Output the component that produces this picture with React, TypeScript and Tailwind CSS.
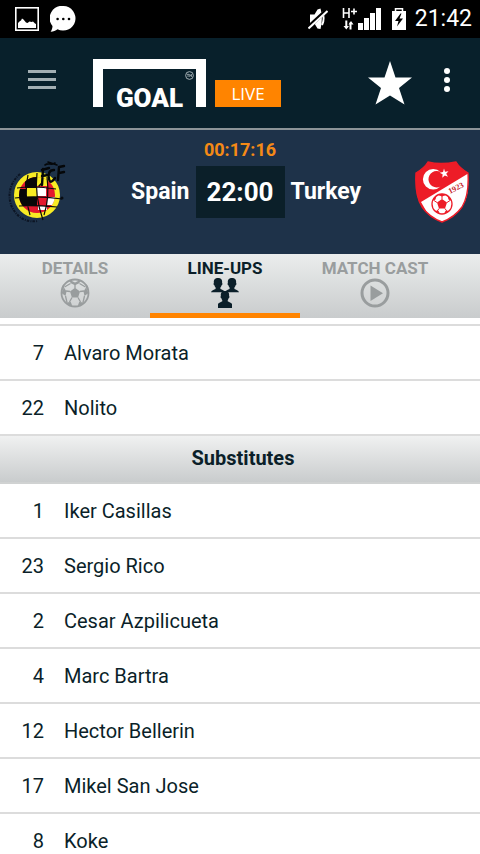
import { useState } from "react";

type Player = { number: number; name: string };

const starters: Player[] = [
  { number: 7, name: "Alvaro Morata" },
  { number: 22, name: "Nolito" },
];

const substitutes: Player[] = [
  { number: 1, name: "Iker Casillas" },
  { number: 23, name: "Sergio Rico" },
  { number: 2, name: "Cesar Azpilicueta" },
  { number: 4, name: "Marc Bartra" },
  { number: 12, name: "Hector Bellerin" },
  { number: 17, name: "Mikel San Jose" },
  { number: 8, name: "Koke" },
];

function StatusBar() {
  return (
    <div className="flex h-[38px] shrink-0 items-center justify-between bg-black pl-[15px] pr-2 text-white">
      <div className="flex items-center gap-[11px]">
        <svg width="24" height="24" viewBox="0 0 24 24">
          <rect x="0.8" y="0.8" width="22.4" height="22.4" fill="none" stroke="#fff" strokeWidth="1.6" />
          <path d="M3 21v-5l2-2 1-.5 1-2 1.5 1 2.5 3 1.5.5 2-1.5 2 .5 1.5-.5 2 2 1 .5v4z" fill="#fff" />
        </svg>
        <svg width="26" height="26" viewBox="0 0 26 26">
          <path d="M13.5 0a12.3 12.3 0 1 1-6 23.2C5.5 24.8 3.5 25.6.6 25.8c1.2-1.8 1.9-3.5 1.9-5.8A12.3 12.3 0 0 1 13.5 0z" fill="#fff" />
          <circle cx="7.6" cy="13" r="1.3" />
          <circle cx="13.3" cy="13" r="1.3" />
          <circle cx="19" cy="13" r="1.3" />
        </svg>
      </div>
      <div className="flex items-center">
        <svg width="20" height="22" viewBox="0 0 20 22" className="mr-[14px]">
          <path d="M2 6.5h4.500L9.500 1.500l3-1c1.800 6 1.800 14 0 20.500l-3-.500-3-5H2z" fill="#fff" />
          <path d="M14 4c2 4 2 9 0 13" fill="none" stroke="#fff" strokeWidth="2" />
          <path d="M.5 19 19 2" stroke="#000" strokeWidth="4" />
          <path d="M.5 20.500 19.500 3" stroke="#fff" strokeWidth="2" />
        </svg>
        <svg width="39" height="24" viewBox="0 0 39 24" className="mr-[11px]">
          <path d="M1.500 1v10M7 1v10M1.500 6H7M9 4.500h6M12 1.500v6" fill="none" stroke="#fff" strokeWidth="1.6" />
          <path d="M1.500 19 4.300 22.500 7 19M6.500 17.500 9 14l2.500 3.500" fill="#fff" />
          <path d="M4.300 13.500v7.500M8.500 15.500v7" stroke="#fff" strokeWidth="2" />
          <path d="M16 16h5v7h-5zM22 11h5v12h-5zM28 6h5v17h-5zM34 1h5v22h-5z" fill="#fff" />
        </svg>
        <svg width="14" height="22" viewBox="0 0 14 22" className="mr-[9px]">
          <path d="M3.500 3.500V.8h7v2.700" fill="none" stroke="#fff" strokeWidth="1.5" />
          <path d="M0 3h14v19H0z" fill="#fff" />
          <path d="M8.500 5.500 3 13h3.500L5 18.500l6-8H7.500L9.500 5.500z" />
        </svg>
        <span className="text-[23px] leading-6">21:42</span>
      </div>
    </div>
  );
}

function Header() {
  return (
    <header className="flex h-[92px] shrink-0 items-start border-b-2 border-[#8c9498] bg-[#08202b] pl-7 pr-[30px] text-white">
      <button type="button" aria-label="Menu" className="mt-8 flex flex-col gap-[5px]">
        <span className="h-[3px] w-7 bg-[#a3afb3]" />
        <span className="h-[3px] w-7 bg-[#a3afb3]" />
        <span className="h-[3px] w-7 bg-[#a3afb3]" />
      </button>
      <a href="#home" className="ml-[37px] mt-[21px] flex items-end gap-[9px]">
        <span className="relative flex h-12 w-[113px] items-end justify-center border-x-[10px] border-t-[10px] border-white">
          <span className="text-[26px] font-black leading-[18px]">GOAL</span>
          <svg width="9" height="9" viewBox="0 0 10 10" className="absolute right-[2px] top-[2px]">
            <circle cx="5" cy="5" r="4.3" fill="none" stroke="#b6c0c4" strokeWidth="1" />
            <path d="M2.200 3.700h2.400M3.400 3.700v3M5.300 6.700v-3l1 1.500 1-1.500v3" fill="none" stroke="#b6c0c4" strokeWidth="0.8" />
          </svg>
        </span>
        <span className="flex h-[27px] w-[66px] items-center justify-center bg-[#ff8400] font-['Open_Sans',sans-serif] text-[17px]">
          LIVE
        </span>
      </a>
      <div className="ml-auto flex items-start gap-8">
        <button type="button" aria-label="Add to favourites" className="mt-[23px]">
          <svg width="44" height="44" viewBox="0 0 44 44" className="block">
            <path d="M22 0l5.500 16.500H44L31 27 36.500 43.500 22 34.500 7.500 43.500 13 27 0 16.500h16.500z" fill="#fff" />
          </svg>
        </button>
        <button type="button" aria-label="More options" className="mt-[30px] flex flex-col gap-[3px]">
          <span className="size-[6px] rounded-full bg-white" />
          <span className="size-[6px] rounded-full bg-white" />
          <span className="size-[6px] rounded-full bg-white" />
        </button>
      </div>
    </header>
  );
}

function SpainCrest() {
  return (
    <svg width="60" height="64" viewBox="0 0 60 64" role="img" aria-label="Spain">
      <defs>
        <clipPath id="spain-ball">
          <circle cx="29" cy="35" r="18" />
        </clipPath>
      </defs>
      <path d="M12 14C-2 26-2 46 12 57c5 4 12 5 18 4" fill="none" stroke="#0c1524" strokeWidth="2" strokeDasharray="2.5 1.2 1 1" />
      <circle cx="29" cy="35" r="20.5" fill="#f8ec24" stroke="#f8ec24" strokeWidth="5" />
      <circle cx="29" cy="35" r="18" fill="#e3192e" />
      <g clipPath="url(#spain-ball)">
        <path d="M17 16h12v12H17zM10 29h8v17h-8zM18 37h11v9H18z" fill="#080808" />
        <path d="M18 28h11v9H18zM29 16h10v10H29z" fill="#f8ec24" />
        <path d="M29 27h9v9h-9zM39 37h8v8h-8zM30 46h9v4h-9z" fill="#fff" />
      </g>
      <path d="M20 15c-3 13-2 27 2 40M29 13c-2 17 0 30 6 47M39 17c2 15 1 26-3 38M9 28c14-2 26-1 39 1M7 38c17-2 33-1 47 1M11 46c13-1 26 0 38 1" fill="none" stroke="#0a0a0a" strokeWidth="1.2" />
      <g fill="none" stroke="#050709" strokeWidth="2.4" strokeLinecap="round">
        <path d="M34 25 35 9M34 10l7-2M34 16l6-1M46 10c-5 0-6 4-5 9s4 2 6-1M50 20l1-13M51 7l5-1M51 13l5-1" />
        <path d="M37 5c4-3 6 1 10-2M40 2l9 3M34 23l-3 3" strokeWidth="1.6" />
      </g>
      <circle cx="54" cy="38" r="1.5" fill="#090d12" />
    </svg>
  );
}

function TurkeyCrest() {
  return (
    <svg width="54" height="62" viewBox="0 0 54 62" role="img" aria-label="Turkey">
      <defs>
        <clipPath id="turkey-shield">
          <path d="M13 1c8 2 18 2 28 0 3 5 7 8 12 11 1 17-1 26-6 34-5 7-12 12-20 15C19 58 12 53 7 46 2 38 0 29 1 12 6 9 10 6 13 1z" />
        </clipPath>
      </defs>
      <g clipPath="url(#turkey-shield)">
        <path d="M0 0h54v62H0z" fill="#ed1c27" />
        <path d="M54 12V62H18L6 41z" fill="#fff" />
      </g>
      <path d="M13 1c8 2 18 2 28 0 3 5 7 8 12 11 1 17-1 26-6 34-5 7-12 12-20 15C19 58 12 53 7 46 2 38 0 29 1 12 6 9 10 6 13 1z" fill="none" stroke="#ed1c27" strokeWidth="1.4" />
      <path d="M25.500 11A10.300 10.300 0 1 0 25.500 25.500A8.200 8.200 0 1 1 25.500 11z" fill="#fff" />
      <path d="M29 7.500l1 3.200 3.500-.5-2.300 2.600 1.800 3-3.200-1.300-2.500 2.300.3-3.500-3-1.600 3.400-.8z" fill="#fff" />
      <circle cx="27" cy="43" r="10" fill="#fff" stroke="#ed1c27" strokeWidth="1.3" />
      <path d="M27 38l5 3.600-2 5.900h-6l-2-5.900zM23 34l4 1.500 4-1.500-4-1.300zM17.500 40l3-1.500 1-3.500-3 2zM36.500 40l-3-1.500-1-3.500 3 2zM20 49.500l3.500.5 1.500 2.500-3-1zM34 49.500l-3.500.5-1.500 2.500 3-1z" fill="#ed1c27" />
      <path d="M27 38v-3M32 41.500l3-2M30 47.500l2 3M24 47.500l-2 3M22 41.500l-3-2" stroke="#ed1c27" />
      <text x="35" y="33" fill="#c51b2b" fontSize="8" fontWeight="700" fontFamily="Liberation Serif, serif" transform="rotate(-27 35 33)">
        1923
      </text>
    </svg>
  );
}

function MatchBar() {
  return (
    <section className="flex h-[124px] shrink-0 items-start bg-[#1e3249] px-2 text-white">
      <div className="mt-[30px] w-[60px]">
        <SpainCrest />
      </div>
      <div className="flex-1 pt-[10px] text-center">
        <p className="text-[18px] font-bold leading-5 text-[#f58a16]">00:17:16</p>
        <div className="mt-[6px] grid grid-cols-[1fr_auto_1fr] items-center gap-[6px] text-[23px] font-bold">
          <span className="text-right">Spain</span>
          <span className="flex h-[52px] w-[89px] items-center justify-center bg-[#0b1f29] text-[26px]">22:00</span>
          <span className="text-left">Turkey</span>
        </div>
      </div>
      <div className="mt-[31px] flex w-[60px] justify-center">
        <TurkeyCrest />
      </div>
    </section>
  );
}

function BallIcon() {
  return (
    <svg width="30" height="30" viewBox="0 0 30 30" className="block">
      <circle cx="15" cy="15" r="13.5" fill="none" stroke="currentColor" strokeWidth="1.8" />
      <path d="M15 9.800l5 3.700-1.900 5.900h-6.200L10 13.500zM10.500 2.200 15 4.500l4.500-2.300 1 .8-1.300 2.300L15 7.300l-4.200-2L9.500 3zM1.200 14l2.800-4.500-.5-3.500-1.700 3zM4 9.500l2.500 4-1 4.500L1.500 15zM28.800 14 26 9.500l.5-3.500 1.700 3zM26 9.500l-2.500 4 1 4.500 4-3zM6 24.500l4.800-.5 1.500 4-3.300-.5zM24 24.500l-4.800-.5-1.500 4 3.300-.5z" fill="currentColor" />
      <path d="M15 10V6M20 13.500l4-.5M18 19.500l2.500 4.500M12 19.500 9.500 24M10 13.500 6 13M10.500 5.500 4.500 9M19.500 5.500l6 3.500M5.500 18l1.500 6.500M24.500 18 23 24.500" stroke="currentColor" strokeWidth="1.3" />
    </svg>
  );
}

function LineupIcon() {
  return (
    <svg width="30" height="30" viewBox="0 0 30 30" className="block">
      <defs>
        <path id="bust" d="M7 0C3.500 0 2.500 2.300 2.900 5c-.7.4-.3 2.200.5 2.300.2 1 .6 1.700 1.200 2.200v1.500C3 12 .5 12 0 14.200h14C13.500 12 11 12 9.400 11V9.500c.6-.5 1-1.200 1.200-2.200.8-.1 1.200-1.900.5-2.300.4-2.700-.6-5-4.100-5z" />
      </defs>
      <g fill="currentColor">
        <use href="#bust" x="1" y="0" />
        <use href="#bust" x="15" y="0" />
        <path d="M8 30v-4c1-1.500 3-2 4.500-2.800V21.500l5-.5v2.200C19 24 21 24.500 22 26v4z" />
        <use href="#bust" x="8" y="13" />
      </g>
    </svg>
  );
}

function PlayIcon() {
  return (
    <svg width="30" height="30" viewBox="0 0 30 30" className="block">
      <circle cx="15" cy="15" r="13" fill="none" stroke="currentColor" strokeWidth="3" />
      <path d="M10.500 7.500v15.500L23 15.200z" fill="currentColor" />
    </svg>
  );
}

const tabs = [
  { label: "DETAILS", Icon: BallIcon },
  { label: "LINE-UPS", Icon: LineupIcon },
  { label: "MATCH CAST", Icon: PlayIcon },
];

function PlayerList({ players }: { players: Player[] }) {
  return (
    <ul>
      {players.map((player) => (
        <li key={player.number} className="flex h-[55px] items-center gap-5 border-b-2 border-[#dcdcdc]">
          <span className="w-11 text-right">{player.number}</span>
          <span>{player.name}</span>
        </li>
      ))}
    </ul>
  );
}

export default function App() {
  const [activeTab, setActiveTab] = useState("LINE-UPS");

  return (
    <div className="flex h-screen flex-col overflow-hidden bg-white font-[Roboto,sans-serif] text-[#0b1f29]">
      <StatusBar />
      <Header />
      <MatchBar />
      <nav className="flex h-16 shrink-0 bg-linear-to-b from-[#ebeded] to-[#c9cccd]">
        {tabs.map(({ label, Icon }) => (
          <button
            key={label}
            type="button"
            onClick={() => setActiveTab(label)}
            className={`flex w-[150px] flex-col items-center border-b-5 pt-1 text-[17px] font-bold leading-5 ${
              activeTab === label ? "border-[#ff8400] text-[#0b1f29]" : "border-transparent text-[#999d9e]"
            }`}
          >
            {label}
            <Icon />
          </button>
        ))}
      </nav>
      <main className="min-h-0 flex-1 overflow-y-auto pt-[6px] text-[20px] leading-6 [scrollbar-width:none]">
        <div className="border-t-2 border-[#dcdcdc]">
          <PlayerList players={starters} />
        </div>
        <h2 className="flex h-12 items-center justify-center border-b-2 border-[#d0d2d2] bg-linear-to-b from-[#f0f1f1] to-[#c9cccd] pb-[2px] pl-[6px] font-bold">
          Substitutes
        </h2>
        <PlayerList players={substitutes} />
      </main>
    </div>
  );
}
